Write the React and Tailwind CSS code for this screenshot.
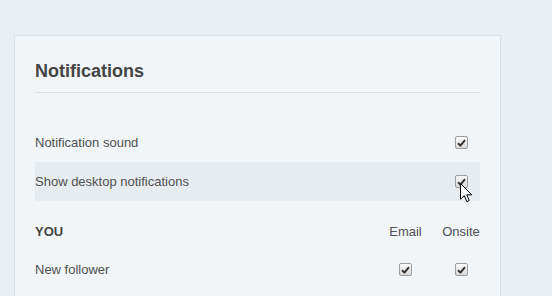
import React from 'react';

const font = { fontFamily: '"Liberation Sans", Arial, sans-serif' };

function Check() {
    return (
        <span className="flex h-[13px] w-[13px] items-center justify-center rounded-[2px] border border-[#9d9d9d] bg-gradient-to-b from-[#fbfbfb] to-[#d9d9d9]">
            <svg width="9" height="8" viewBox="0 0 9 8">
                <path d="M1 4.2 L3.4 6.6 L8 1.2" fill="none" stroke="#333" strokeWidth="2" strokeLinejoin="round" />
            </svg>
        </span>
    );
}

function Cursor() {
    return (
        <svg width="13" height="20" viewBox="0 0 13 20" className="absolute left-[460px] top-[183px]">
            <path
                d="M0.5 0.5 L0.5 16.2 L4.3 12.6 L6.8 18.6 L9.2 17.6 L6.8 11.8 L11.8 11.8 Z"
                fill="#fff"
                stroke="#000"
                strokeWidth="1"
                strokeLinejoin="miter"
            />
        </svg>
    );
}

function Row({ label, email, onsite, shaded }) {
    return (
        <div className={`flex h-[39px] items-center ${shaded ? 'bg-[#e7ecf0]' : ''}`}>
            <span className="flex-1 text-[13px] text-[#505050]">{label}</span>
            <span className="flex w-[33px] justify-center">{email && <Check />}</span>
            <span className="ml-5 flex w-[38px] justify-center">{onsite && <Check />}</span>
        </div>
    );
}

export default function App() {
    return (
        <div className="relative h-screen overflow-hidden bg-[#e9eef2] pl-[14px] pt-[35px]" style={font}>
            <div className="h-[300px] w-[487px] border border-[#dbe1e6] bg-[#f1f5f8] px-5">
                <h1 className="border-b border-[#dce1e5] pb-[9px] pt-[23px] text-[18px] font-bold leading-6 text-[#444]">
                    Notifications
                </h1>

                <div className="mt-[30px]">
                    <Row label="Notification sound" onsite />
                    <Row label="Show desktop notifications" onsite shaded />
                </div>

                <div className="mt-[13px] flex h-[36px] items-center text-[13px]">
                    <span className="flex-1 font-bold text-[#444]">YOU</span>
                    <span className="w-[33px] text-center text-[#505050]">Email</span>
                    <span className="ml-5 w-[38px] text-center text-[#505050]">Onsite</span>
                </div>
                <Row label="New follower" email onsite />
            </div>
            <Cursor />
        </div>
    );
}
